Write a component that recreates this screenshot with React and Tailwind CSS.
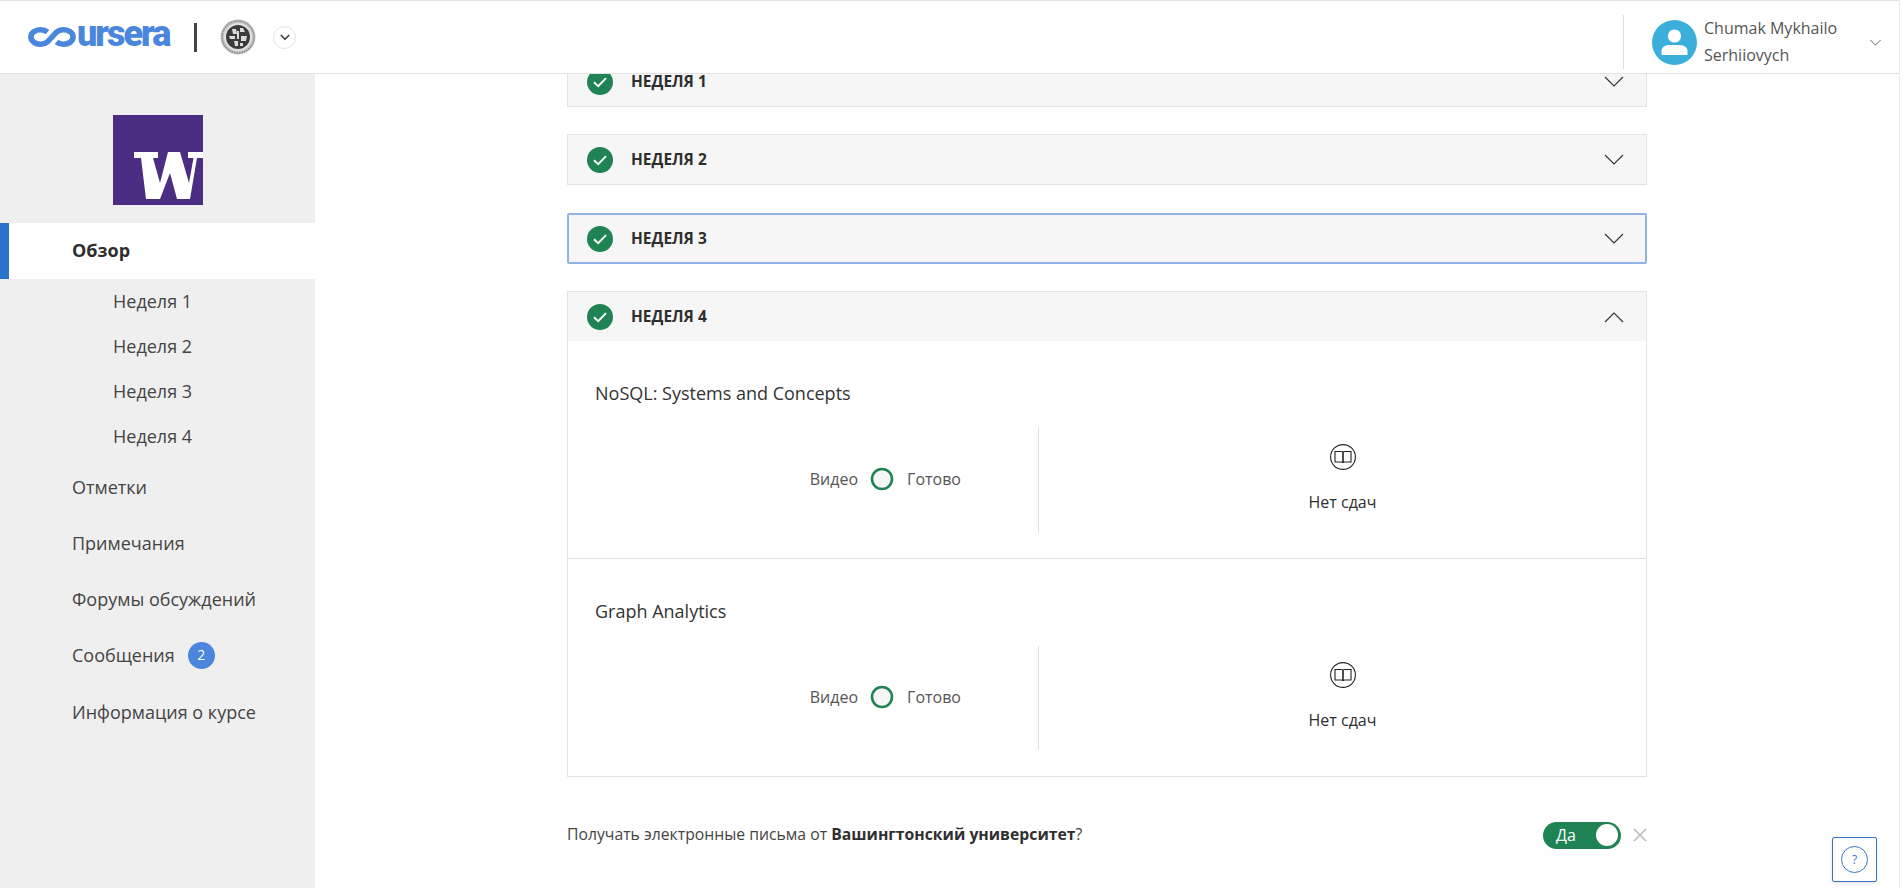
import React from "react";

function Chevron({ up, cls = "w-[20px] h-[12px]" }) {
  return (
    <svg viewBox="0 0 20 12" className={cls} fill="none" stroke="#333" strokeWidth="1.2">
      <path d={up ? "M1 11 L10 2 L19 11" : "M1 1 L10 10 L19 1"} />
    </svg>
  );
}

function Check() {
  return (
    <svg viewBox="0 0 26 26" className="w-[26px] h-[26px] shrink-0">
      <circle cx="13" cy="13" r="13" fill="#1f8354" />
      <path d="M7 13.2 L11.2 17.2 L19 9.2" fill="none" stroke="#fff" strokeWidth="1.9" />
    </svg>
  );
}

function WeekHead({ n, up }) {
  return (
    <div className="h-[49px] flex items-center pl-[19px] pr-[22px] bg-[#f6f6f6]">
      <Check />
      <span className="ml-[18px] text-[15.5px] leading-[20px] mt-[-2px] font-bold text-[#2f2f2f] flex-1">НЕДЕЛЯ {n}</span>
      <Chevron up={up} />
    </div>
  );
}

function Book() {
  return (
    <svg viewBox="0 0 26 26" className="w-[26px] h-[26px]" fill="none" stroke="#222" strokeWidth="1.1">
      <circle cx="13" cy="13" r="12.4" />
      <path d="M5 7.5 H11.5 Q13 7.5 13 9 V19 Q13 18 11.5 18 H5 Z" />
      <path d="M21 7.5 H14.5 Q13 7.5 13 9 V19 Q13 18 14.5 18 H21 Z" />
    </svg>
  );
}

function Lesson({ title, border, h }) {
  return (
    <div className={`${h} pt-[40px] pl-[27px] ${border ? "border-b border-[#e0e0e0]" : ""}`}>
      <div className="text-[18px] leading-[24px] text-[#333]">{title}</div>
      <div className="flex mt-[23px] h-[104px]">
        <div className="w-[444px] border-r border-[#dedede] shrink-0 flex items-center justify-end pr-[77px] pb-[3px] text-[16px] text-[#555]">
          <span>Видео</span>
          <svg viewBox="0 0 24 24" className="w-[24px] h-[24px] ml-[12px] mr-[13px]">
            <circle cx="12" cy="12" r="10" fill="#f6f6f6" stroke="#1f8354" strokeWidth="2.6" />
          </svg>
          <span>Готово</span>
        </div>
        <div className="flex-1 flex flex-col items-center pt-[16px] text-[#2f2f2f]">
          <Book />
          <div className="mt-[21px] text-[16px] leading-[22px]">Нет сдач</div>
        </div>
      </div>
    </div>
  );
}

function Logo() {
  return (
    <div className="flex items-center w-[143px] h-[24px]">
      <svg viewBox="0 0 50 20" className="w-[50px] h-[20px] shrink-0" fill="none" stroke="#4a86dc" strokeWidth="5.6">
        <path d="M20.5 5.2 A9.5 7.2 0 1 0 20.5 14.8 L29.5 5.2 A9.5 7.2 0 1 1 29.5 14.8" />
      </svg>
      <span className="text-[36px] leading-[24px] font-black tracking-[-2px] text-[#4a86dc] font-['Roboto',sans-serif] mt-[-7px]">ursera</span>
    </div>
  );
}

function Seal() {
  return (
    <svg viewBox="0 0 36 36" className="w-[36px] h-[36px]">
      <circle cx="18" cy="18" r="17.5" fill="#c4c4c4" />
      <circle cx="18" cy="18" r="16" fill="none" stroke="#888" strokeWidth="1.4" strokeDasharray="1.5 1" />
      <circle cx="18" cy="18" r="14" fill="#e2e2e2" />
      <circle cx="18" cy="18" r="12" fill="#3c3c3c" />
      <path d="M12 10 h4 l1 5 h-4z M20 9 h3 l2 4 h-5z M9 17 h6 v3 h-5z M17 12 h2 v8 h-2z M21 17 h6 l-1 5 h-5z M14 22 h4 v5 h-3z M20 24 h3 v3 h-3z" fill="#dcdcdc" />
    </svg>
  );
}

const sub = ["Неделя 1", "Неделя 2", "Неделя 3", "Неделя 4"];

export default function App() {
  return (
    <div className="h-[888px] w-[1904px] overflow-hidden bg-white pr-[4px] font-['Open_Sans',sans-serif]">
      <div className="h-full border-r border-[#ececec] flex flex-col relative">
        <header className="h-[74px] shrink-0 border-t border-b border-[#e2e2e2] flex items-center bg-white z-10">
          <div className="ml-[27px]"><Logo /></div>
          <div className="ml-[24px] w-[3px] h-[29px] bg-[#444]" />
          <div className="ml-[23px]"><Seal /></div>
          <div className="ml-[17px] w-[23px] h-[23px] rounded-full border border-[#e4e4e4] flex items-center justify-center">
            <svg viewBox="0 0 12 8" className="w-[10px] h-[7px]" fill="none" stroke="#333" strokeWidth="1.8"><path d="M1 1 L6 6 L11 1" /></svg>
          </div>
          <div className="flex-1" />
          <div className="flex items-center mt-[10px]">
            <div className="w-[1px] h-[54px] bg-[#ddd] mr-[28px]" />
            <svg viewBox="0 0 45 45" className="w-[45px] h-[45px] shrink-0 mr-[7px]">
              <circle cx="22.5" cy="22.5" r="22.5" fill="#3bafda" />
              <circle cx="22.5" cy="16" r="6.6" fill="#fff" />
              <path d="M9.5 35 V30.5 Q10 25.5 17 25 H28 Q35 25.5 35.5 30.5 V35 Z" fill="#fff" />
            </svg>
            <div className="w-[165px] text-[16px] leading-[27px] text-[#555]">
              <div>Chumak Mykhailo</div>
              <div>Serhiiovych</div>
            </div>
            <svg viewBox="0 0 14 8" className="w-[13px] h-[7px] mr-[17px]" fill="none" stroke="#555" strokeWidth="1"><path d="M1 1 L7 7 L13 1" /></svg>
          </div>
        </header>

        <div className="flex flex-1 min-h-0">
          <aside className="w-[315px] shrink-0 bg-[#efefef] text-[#444]">
            <div className="h-[149px] flex justify-center pt-[41px] pl-[1px]">
              <svg viewBox="0 0 90 90" className="w-[90px] h-[90px]">
                <rect width="90" height="90" fill="#4b2e83" />
                <path d="M21 37 H45 V43 H40 L47 68 L55 37 H67 L76 68 L80.5 43 H75 V37 H90 V43 H84 L77 84 H64 L57 58 L47 84 H33 L28 43 H21 Z" fill="#fff" />
              </svg>
            </div>
            <div className="h-[56px] bg-white border-l-[9px] border-[#2a73cc] pl-[63px] pb-[2px] flex items-center text-[18px] font-bold text-[#2f2f2f]">Обзор</div>
            <div>
              {sub.map((s) => (
                <div key={s} className="h-[45px] pl-[113px] flex items-center text-[18px]">{s}</div>
              ))}
            </div>
            <div className="text-[18px] leading-[24px] pl-[72px] flex flex-col">
              <div className="h-[56px] flex items-center">Отметки</div>
              <div className="h-[56px] flex items-center">Примечания</div>
              <div className="h-[56px] flex items-center">Форумы обсуждений</div>
              <div className="h-[56px] flex items-center">
                Сообщения
                <span className="ml-[13px] w-[27px] h-[27px] rounded-full bg-[#4a86dc] text-white text-[14px] flex items-center justify-center">2</span>
              </div>
              <div className="h-[57px] flex items-center">Информация о курсе</div>
            </div>
          </aside>

          <main className="flex-1 min-w-0 overflow-hidden pl-[252px]">
            <div className="w-[1080px] -mt-[18px]">
              <div className="h-[51px] border border-[#e4e4e4]"><WeekHead n={1} /></div>
              <div className="h-[51px] border border-[#e4e4e4] mt-[27px]"><WeekHead n={2} /></div>
              <div className="h-[51px] border-2 border-[#8fb3e6] mt-[28px] rounded-[2px] -mb-px overflow-hidden"><div className="-m-px"><WeekHead n={3} /></div></div>
              <div className="border border-[#e4e4e4] mt-[28px]">
                <WeekHead n={4} up />
                <Lesson title="NoSQL: Systems and Concepts" border h="h-[218px]" />
                <Lesson title="Graph Analytics" h="h-[217px]" />
              </div>
              <div className="flex items-center mt-[44px] h-[28px] text-[15.75px] text-[#444]">
                <span>Получать электронные письма от <b className="font-bold text-[#2f2f2f]">Вашингтонский университет</b>?</span>
                <div className="flex-1" />
                <div className="w-[78px] h-[27px] rounded-full bg-[#1f8354] flex items-center pl-[13px] pr-[3px] text-white text-[16px]">
                  <span className="flex-1">Да</span>
                  <span className="w-[22px] h-[22px] rounded-full bg-white" />
                </div>
                <svg viewBox="0 0 16 16" className="w-[16px] h-[16px] ml-[11px] mr-[-1px]" fill="none" stroke="#bbb" strokeWidth="1.7"><path d="M2 2 L14 14 M14 2 L2 14" /></svg>
              </div>
            </div>
          </main>
        </div>
        <div className="absolute left-[1832px] top-[837px] w-[45px] h-[45px] border border-[#3b74c4] rounded-[2px] bg-white flex items-center justify-center shadow-sm">
          <span className="w-[27px] h-[27px] rounded-full border border-[#3b74c4] text-[#3b74c4] text-[12px] flex items-center justify-center">?</span>
        </div>
      </div>
    </div>
  );
}
